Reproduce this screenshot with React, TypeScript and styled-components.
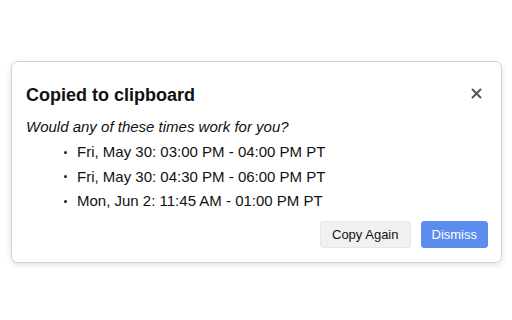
import React from "react";
import styled, { createGlobalStyle } from "styled-components";

const Global = createGlobalStyle`
  html, body { margin: 0; padding: 0; background: #ffffff; }
  body { font-family: "Liberation Sans", Arial, sans-serif; color: #111; }
`;

const Page = styled.div`
  width: 512px;
  height: 320px;
  padding: 61px 10px 0 11px;
  box-sizing: border-box;
`;

const Card = styled.div`
  width: 491px;
  height: 202px;
  box-sizing: border-box;
  border: 1px solid #d4d4d4;
  border-radius: 7px;
  box-shadow: 0 2px 6px rgba(0, 0, 0, 0.12);
  background: #fff;
  padding: 20px 13px 14px 14px;
  display: flex;
  flex-direction: column;
`;

const Header = styled.div`
  display: flex;
  align-items: center;
  justify-content: space-between;
  height: 26px;
`;

const Title = styled.h2`
  margin: 0;
  font-size: 18px;
  font-weight: 700;
  color: #111;
`;

const Close = styled.button`
  border: none;
  background: none;
  padding: 0;
  margin-right: 5px;
  margin-top: -4px;
  width: 14px;
  height: 14px;
  display: flex;
  align-items: center;
  justify-content: center;
  cursor: pointer;
`;

const Intro = styled.p`
  margin: 10px 0 0 0;
  font-size: 15px;
  font-style: italic;
  line-height: 18px;
  color: #111;
`;

const List = styled.ul`
  margin: 4px 0 0 0;
  padding: 0 0 0 38px;
  list-style: none;
`;

const Item = styled.li`
  font-size: 15px;
  line-height: 24.5px;
  color: #111;
  display: flex;
  align-items: center;
  &::before {
    content: "";
    width: 3px;
    height: 3px;
    border-radius: 50%;
    background: #222;
    margin-right: 10px;
  }
`;

const Actions = styled.div`
  display: flex;
  justify-content: flex-end;
  gap: 10px;
  margin-top: auto;
`;

const Button = styled.button<{ $primary?: boolean }>`
  height: 27px;
  padding: 0 ${(p) => (p.$primary ? "10px" : "11px")};
  border-radius: 3px;
  font-family: "Liberation Sans", Arial, sans-serif;
  font-size: 13px;
  border: 1px solid ${(p) => (p.$primary ? "#5b8cee" : "#e6e6e6")};
  background: ${(p) => (p.$primary ? "#5b8cee" : "#f1f1f1")};
  color: ${(p) => (p.$primary ? "#ffffff" : "#111")};
  cursor: pointer;
`;

const times = [
  "Fri, May 30: 03:00 PM - 04:00 PM PT",
  "Fri, May 30: 04:30 PM - 06:00 PM PT",
  "Mon, Jun 2: 11:45 AM - 01:00 PM PT",
];

export default function App() {
  return (
    <>
      <Global />
      <Page>
        <Card>
          <Header>
            <Title>Copied to clipboard</Title>
            <Close aria-label="Close">
              <svg width="11" height="11" viewBox="0 0 11 11">
                <path d="M1.5 1.5 L9.5 9.5 M9.5 1.5 L1.5 9.5" stroke="#555" strokeWidth="2" strokeLinecap="round" />
              </svg>
            </Close>
          </Header>
          <Intro>Would any of these times work for you?</Intro>
          <List>
            {times.map((t) => (
              <Item key={t}>{t}</Item>
            ))}
          </List>
          <Actions>
            <Button>Copy Again</Button>
            <Button $primary>Dismiss</Button>
          </Actions>
        </Card>
      </Page>
    </>
  );
}
